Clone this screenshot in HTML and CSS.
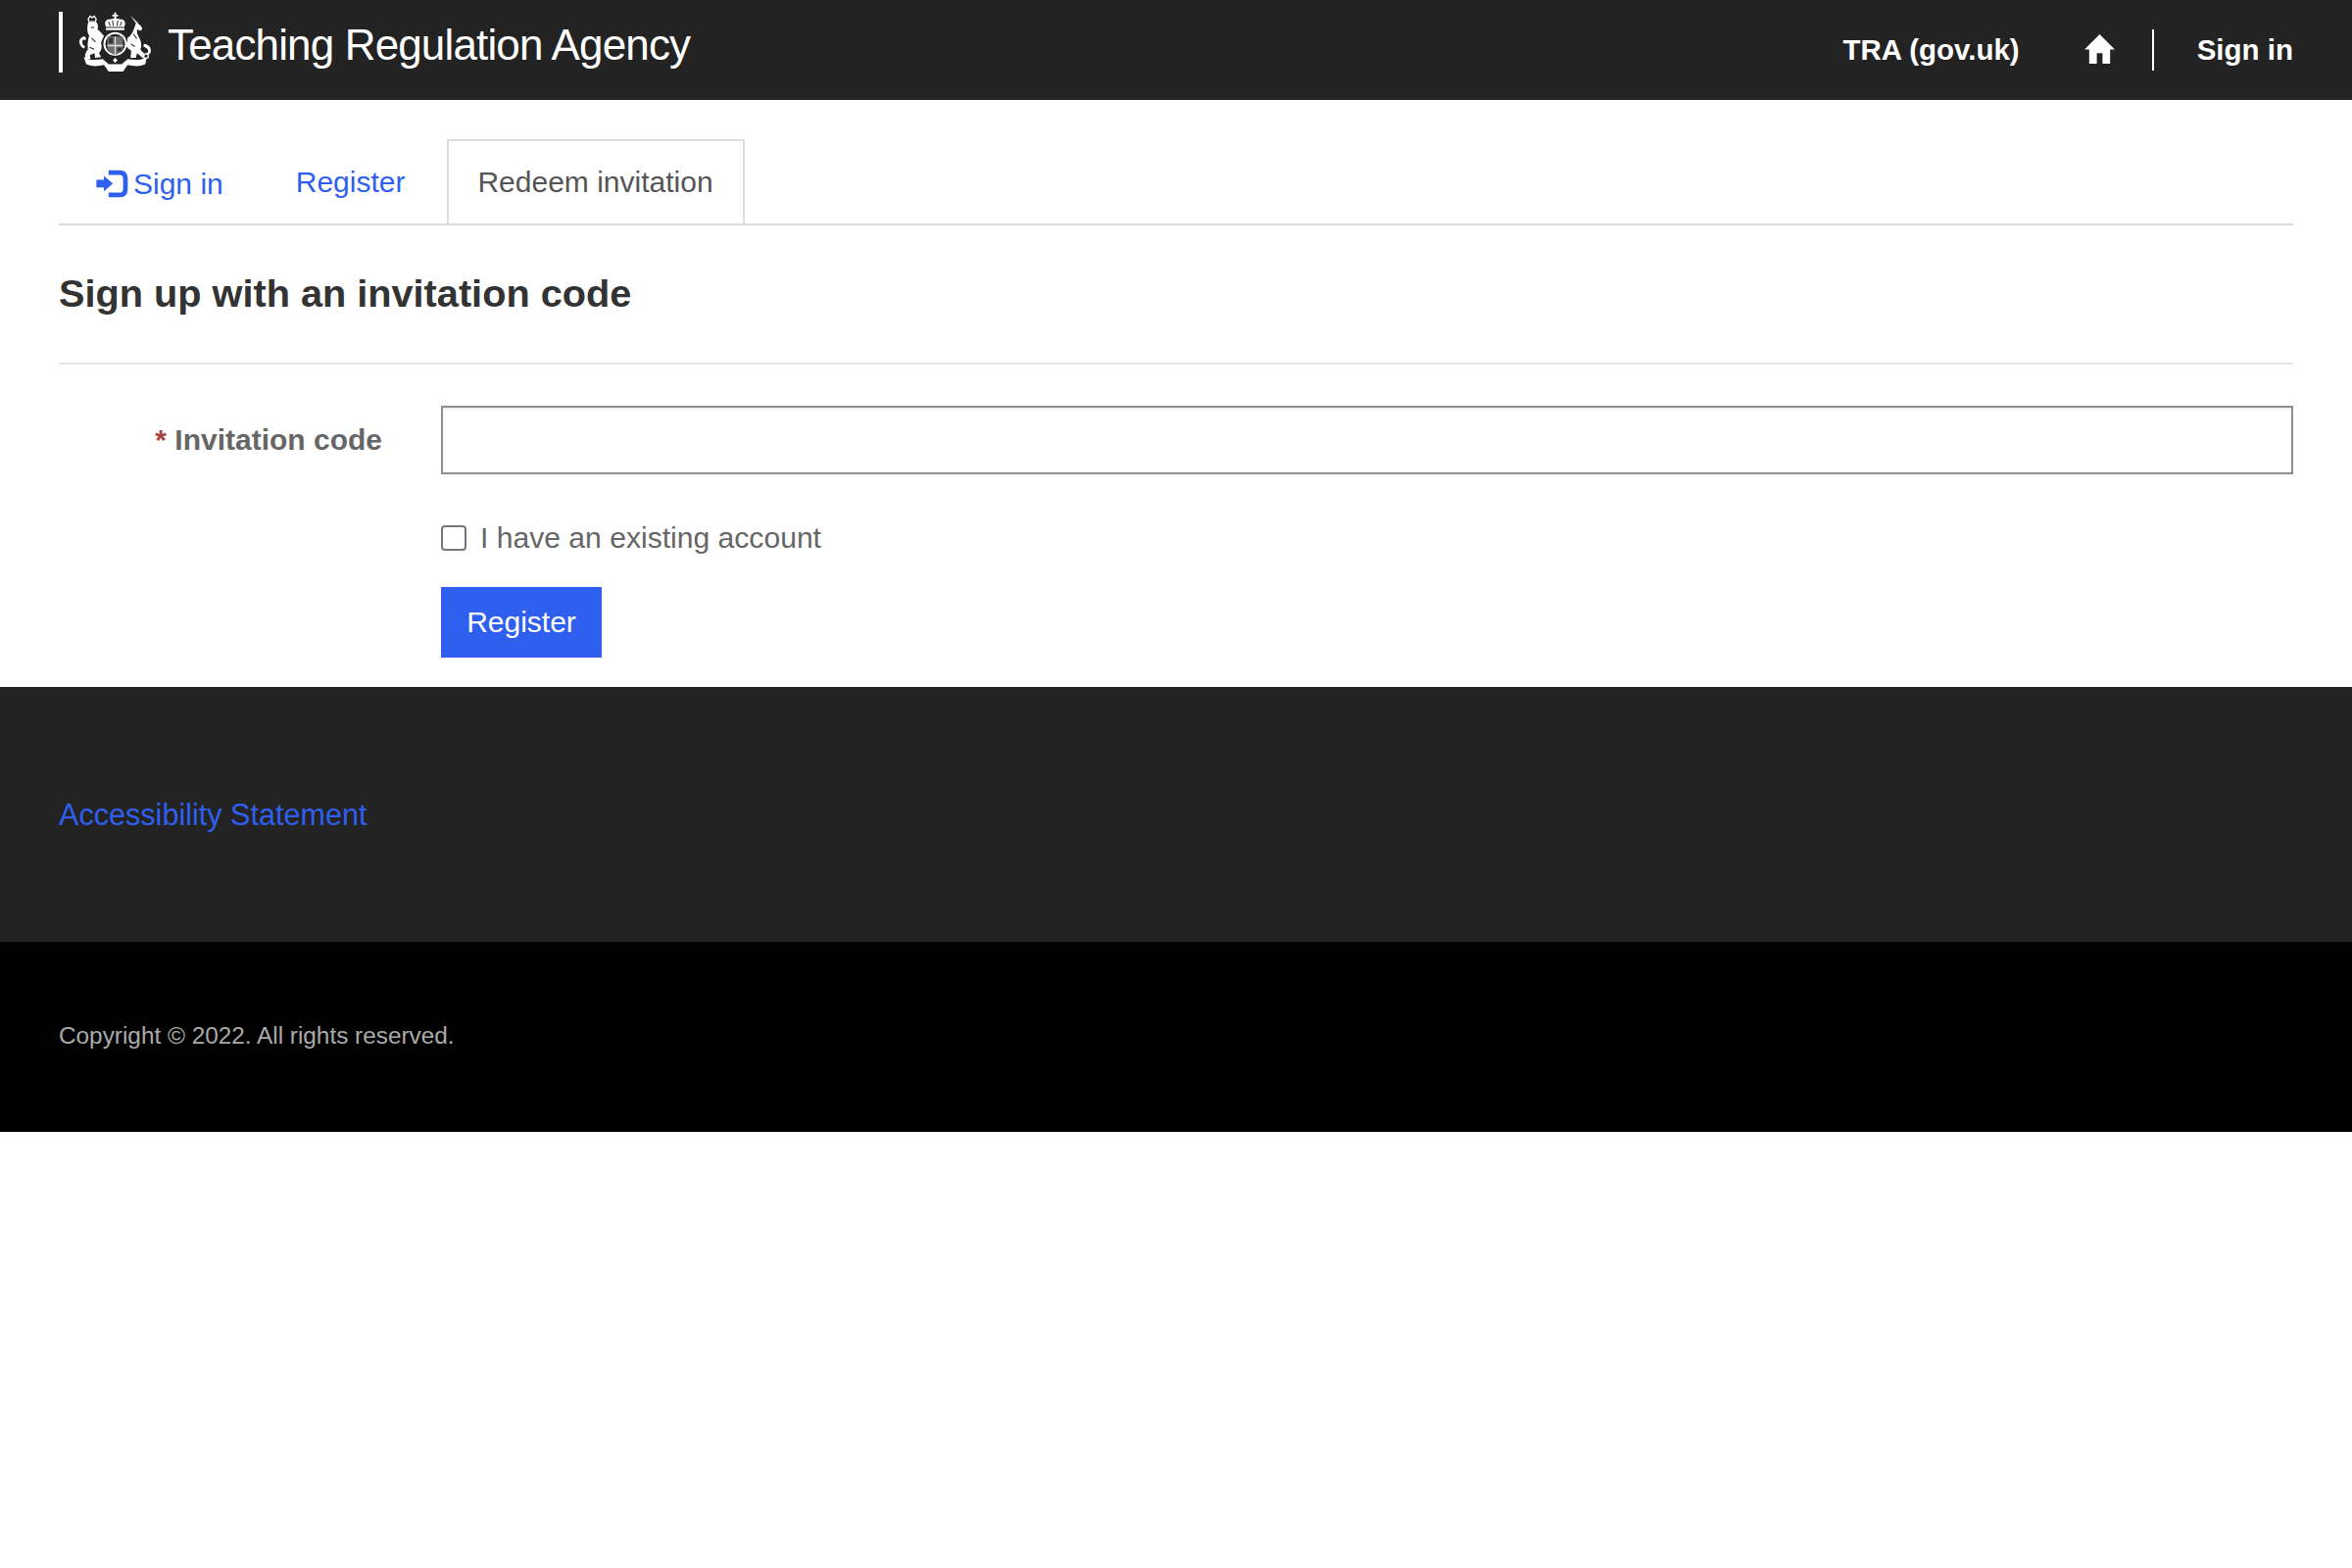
FILE: index.html
```html
<!DOCTYPE html>
<html lang="en">

<head>
    <meta charset="UTF-8">
    <meta name="viewport" content="width=device-width, initial-scale=1.0">
    <title>Teaching Regulation Agency</title>
    <link rel="stylesheet" href="styles.css">
</head>

<body>
    <header class="site-header">
        <a class="brand" href="#">
            <svg class="crest" viewBox="25 20 230 185" fill="#fff" aria-hidden="true">
                <!-- crown -->
                <path d="M137 22h6v7h6v5h-6v6l14 3c12-2 17 10 11 23h-56c-6-13-1-25 11-23l14-3v-6h-6v-5h6z" />
                <path d="M120 50l5 13M132 46l2 17M148 46l-2 17M160 50l-5 13" stroke="#232323" stroke-width="3" />
                <rect x="112" y="69" width="56" height="7" />
                <!-- garter and shield -->
                <circle cx="140" cy="118" r="33" fill="none" stroke="#fff" stroke-width="6" />
                <path d="M116 95h48v30c0 14-12 22-24 27-12-5-24-13-24-27z" fill="#6e6e6e" />
                <path d="M138 95h4v57h-4zM116 121h48v4h-48z" fill="#ddd" />
                <path d="M121 100h12v16h-12zM147 130h12v10h-12z" fill="#333" />
                <!-- lion -->
                <path d="M58 42l6-9 6 5 6-5 6 9-2 8H60z" fill="none" stroke="#fff" stroke-width="4" />
                <path d="M58 52h26c4 8 5 16 2 22 8 6 14 14 20 20-4 8-8 14-9 22 4 10 2 20-6 30l6 12-18 2-2-14-14 6 2 12-16 1c-2-12 0-22 8-30-2-18 0-30 4-42-6-8-8-24-3-41z" />
                <path d="M44 132C28 122 26 102 42 96c8-2 12 6 7 11l-5-3c-8 6-4 16 5 22z" />
                <path d="M66 68h10M68 100l12 12M62 128l14 6" stroke="#232323" stroke-width="3" fill="none" />
                <!-- unicorn -->
                <path d="M186 30l25 26-5 3z" />
                <path d="M203 56c10 0 16 6 20 16l-6 6-10-4c-2 10 2 18 8 28 6 14 6 24 2 34l14 14-6 12-18-16-4 14h-16l2-22c-8-4-14-10-18-18 6-8 8-12 6-20 10-4 18-18 26-44z" />
                <path d="M228 118c14 2 24 12 20 26-3 8-12 8-14 2l6-2c4-8-4-14-14-18z" />
                <circle cx="234" cy="155" r="7" fill="none" stroke="#fff" stroke-width="4" />
                <path d="M196 88l10 14M188 118l12 8" stroke="#232323" stroke-width="3" fill="none" />
                <!-- motto ribbon -->
                <path d="M44 158c18 12 40 8 58 6l18 16h40l18-16c18 2 40 6 58-6l-4 22c-18 8-36 6-54 2l-14 20h-44l-14-20c-18 4-36 6-54-2z" />
                <path d="M133 168l7-8 7 8-7 8z" />
            </svg>
            <span class="brand-name">Teaching Regulation Agency</span>
        </a>
        <nav class="top-nav">
            <a class="top-link" href="#">TRA (gov.uk)</a>
            <a class="home-link" href="#" aria-label="Home">
                <svg viewBox="0 0 32 32" fill="#fff"><path d="M16 1 32 17H27V32H19V21H13V32H5V17H0Z" /></svg>
            </a>
            <a class="top-link signin-link" href="#">Sign in</a>
        </nav>
    </header>

    <main class="content">
        <ul class="tabs">
            <li><a href="#" class="tab-signin">
                <svg class="signin-icon" viewBox="54 66 98 86" fill="currentColor">
                    <path d="M55 97H78V85L105 108 78 132V120H55Z" />
                    <path d="M92 68H125Q150 68 150 93V125Q150 150 125 150H92V136H125Q136 136 136 125V93Q136 82 125 82H92Z" />
                </svg>Sign in</a></li>
            <li><a href="#">Register</a></li>
            <li class="active"><a href="#">Redeem invitation</a></li>
        </ul>

        <h2 class="page-title">Sign up with an invitation code</h2>

        <form class="invite-form">
            <label class="field-label" for="code"><span class="required">*</span> Invitation code</label>
            <input class="field-input" id="code" type="text">
            <label class="check-row"><input class="check" type="checkbox"> I have an existing account</label>
            <button class="btn-primary" type="button">Register</button>
        </form>
    </main>

    <footer>
        <div class="footer-links"><a href="#">Accessibility Statement</a></div>
        <div class="footer-copy">Copyright © 2022. All rights reserved.</div>
    </footer>
</body>

</html>
```

FILE: styles.css
```css
* {
    box-sizing: border-box;
}

body {
    font-family: 'Liberation Sans', Arial, sans-serif;
    font-size: 30px;
    color: #666;
    background: #fff;
    margin: 0;
    padding: 0;
}

a {
    text-decoration: none;
    color: #2f5fef;
}

.site-header {
    display: flex;
    justify-content: space-between;
    align-items: center;
    height: 102px;
    padding: 0 60px;
    background: #232323;
}

.brand {
    display: flex;
    align-items: center;
    height: 62px;
    margin-top: -16px;
    padding-left: 15px;
    border-left: 4px solid #fff;
    color: #fff;
}

.crest {
    width: 77px;
    height: 62px;
}

.brand-name {
    margin-left: 15px;
    padding-top: 5px;
    font-size: 44px;
    letter-spacing: -0.85px;
    color: #fff;
}

.top-nav {
    display: flex;
    align-items: center;
}

.top-link {
    font-size: 29.5px;
    font-weight: bold;
    color: #fff;
}

.home-link {
    display: flex;
    width: 31px;
    height: 31px;
    margin-top: -3px;
    margin-left: 66px;
}

.signin-link {
    margin-left: 38px;
    padding-left: 44px;
    line-height: 42px;
    border-left: 2px solid #fff;
}

.content {
    padding: 40px 60px 30px;
}

.tabs {
    display: flex;
    gap: 14px;
    height: 88px;
    margin: 0;
    padding: 0 0 0 8px;
    list-style: none;
    border-bottom: 2px solid #ddd;
}

.tabs a {
    display: block;
    height: 86px;
    padding: 0 30px;
    line-height: 88px;
}

.tabs .tab-signin {
    padding-top: 2px;
}

.signin-icon {
    width: 33px;
    height: 29px;
    margin-right: 5px;
    vertical-align: -4px;
}

.tabs .active a {
    margin-left: -1px;
    padding: 0 30px 0 29px;
    background: #fff;
    color: #555;
    border: 2px solid #ddd;
    border-bottom: none;
    line-height: 83px;
}

.page-title {
    margin: 0;
    padding: 44px 0 45px;
    font-size: 39.7px;
    line-height: 51px;
    color: #333;
    border-bottom: 2px solid #e5e5e5;
}

.invite-form {
    display: grid;
    grid-template-columns: 330px 1fr;
    column-gap: 60px;
    margin-top: 42px;
}

.field-label {
    font-weight: bold;
    line-height: 70px;
    text-align: right;
}

.required {
    color: #a94442;
}

.field-input {
    height: 70px;
    border: 2px solid #8e8e8e;
    background: #fff;
    box-shadow: inset 0 2px 2px rgba(0, 0, 0, 0.08);
    outline: none;
}

.check-row {
    grid-column: 2;
    display: flex;
    align-items: center;
    gap: 14px;
    margin-top: 45px;
    font-size: 30.1px;
    line-height: 40px;
}

.check {
    appearance: none;
    width: 26px;
    height: 26px;
    margin: 0;
    background: #fff;
    border: 2px solid #767676;
    border-radius: 4px;
}

.btn-primary {
    grid-column: 2;
    justify-self: start;
    width: 164px;
    height: 72px;
    margin-top: 30px;
    font-family: inherit;
    font-size: 30px;
    color: #fff;
    background: #2f5fef;
    border: none;
}

.footer-links {
    display: flex;
    align-items: center;
    height: 260px;
    padding: 0 60px;
    font-size: 30.6px;
    background: #232323;
}

.footer-copy {
    display: flex;
    align-items: center;
    height: 194px;
    padding: 0 60px 2px;
    font-size: 24.35px;
    color: #aaa;
    background: #000;
}
```
